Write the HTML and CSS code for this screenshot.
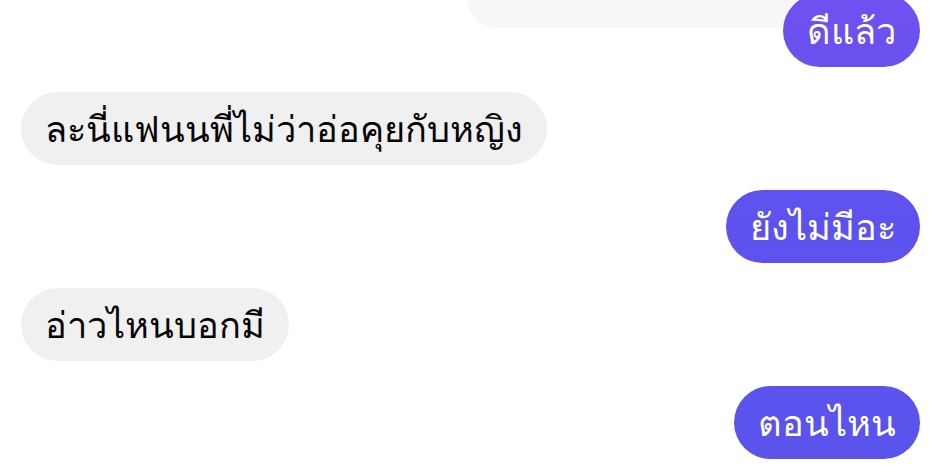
FILE: index.html
```html
<!DOCTYPE html>
<html lang="th">
<head>
<meta charset="utf-8">
<link rel="stylesheet" href="styles.css">
</head>
<body>
<div class="chat">
  <div class="row row-out reply-group">
    <div class="quoted"></div>
    <div class="bubble out over">ดีแล้ว</div>
  </div>
  <div class="row row-in"><div class="bubble in">ละนี่แฟนนพี่ไม่ว่าอ่อคุยกับหญิง</div></div>
  <div class="row row-out"><div class="bubble out">ยังไม่มีอะ</div></div>
  <div class="row row-in"><div class="bubble in">อ่าวไหนบอกมี</div></div>
  <div class="row row-out"><div class="bubble out">ตอนไหน</div></div>
</div>
</body>
</html>
```
FILE: styles.css
```css
html, body {
  margin: 0;
  padding: 0;
  background: #ffffff;
  overflow: hidden;
}
body {
  width: 935px;
  height: 472px;
  font-family: "Noto Sans", "DejaVu Sans", sans-serif;
}
.chat {
  display: flex;
  flex-direction: column;
  gap: 25px;
  padding: 0 15px 0 21px;
  margin-top: -62px;
}
.row {
  display: flex;
}
.row-out {
  justify-content: flex-end;
}
.row-in {
  justify-content: flex-start;
}
.reply-group {
  flex-direction: column;
  align-items: flex-end;
}
.quoted {
  width: 352px;
  height: 90px;
  margin-right: 100px;
  background: #f7f7f7;
  border-radius: 28px;
}
.bubble {
  height: 73px;
  box-sizing: border-box;
  padding: 0 24px;
  border-radius: 37px;
  font-size: 36.2px;
  line-height: 73px;
  white-space: nowrap;
}
.over {
  position: relative;
  margin-top: -34px;
}
.in {
  background: #f0f0f0;
  color: #050505;
}
.out {
  color: #ffffff;
  background: linear-gradient(180deg, #7150f0 0px, #6451ef 110px, #5d52ee 230px, #5a53ec 472px) fixed;
}
```
